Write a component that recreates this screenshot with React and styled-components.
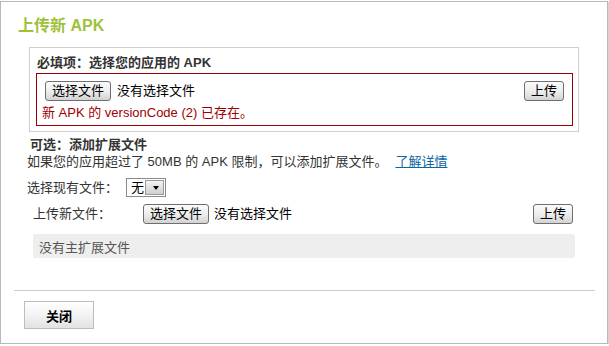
import styled, { createGlobalStyle } from 'styled-components';

const GlobalStyle = createGlobalStyle`
  html, body {
    margin: 0;
    padding: 0;
    background: #fff;
  }
  body {
    font-family: 'Liberation Sans', 'Noto Sans CJK SC', sans-serif;
    font-size: 13px;
    color: #333;
  }
`;

const Dialog = styled.div`
  box-sizing: border-box;
  width: 608px;
  height: 343px;
  margin-top: 1px;
  border: 1px solid #b8b8b8;
  box-shadow: 1px 1px 0 #d6d6d6;
  display: flex;
  flex-direction: column;
  padding: 14px 12px 0 13px;
`;

const Title = styled.h2`
  margin: 0 0 11px 4px;
  font-size: 16px;
  line-height: 20px;
  font-weight: bold;
  color: #9dc23a;
`;

const Body = styled.div`
  margin: 0 16px 0 13px;
  display: flex;
  flex-direction: column;
`;

const RequiredBox = styled.div`
  margin-left: 2px;
  border: 1px solid #cfcfcf;
  padding: 7px 5px 5px 6px;
`;

const Heading = styled.div`
  font-weight: bold;
  line-height: 16px;
  padding-left: ${(p) => p.$indent || 0}px;
  margin-top: ${(p) => p.$top || 0}px;
  color: #333;
`;

const ErrorBox = styled.div`
  margin-top: 2px;
  border: 1px solid #990000;
  padding: 7px 8px 4px 4px;
`;

const Row = styled.div`
  display: flex;
  align-items: center;
  gap: ${(p) => p.$gap || 6}px;
  padding-left: ${(p) => p.$indent || 0}px;
  padding-right: ${(p) => p.$right || 0}px;
  margin-top: ${(p) => p.$top || 0}px;
`;

const Button = styled.button`
  box-sizing: border-box;
  height: 20px;
  padding: 0 6px;
  margin-left: ${(p) => (p.$push ? 'auto' : `${p.$left || 0}px`)};
  border: 1px solid #6f6f6f;
  border-radius: 3px;
  background: linear-gradient(#fbfbfb, #ececec 55%, #d2d2d2);
  font-family: inherit;
  font-size: 13px;
  line-height: 16px;
  color: #000;
`;

const Plain = styled.span`
  color: #000;
  line-height: 16px;
`;

const ErrorText = styled.div`
  margin-top: 4px;
  padding-left: 1px;
  color: #a00000;
  line-height: 16px;
`;

const Text = styled.div`
  line-height: 18px;
  color: #333;
`;

const Link = styled.a`
  margin-left: 8px;
  color: #0b66a5;
  text-decoration: underline;
`;

const Label = styled.span`
  width: ${(p) => (p.$width ? `${p.$width}px` : 'auto')};
  color: #333;
  line-height: 16px;
`;

const Select = styled.span`
  box-sizing: border-box;
  display: inline-flex;
  align-items: center;
  width: 40px;
  height: 19px;
  border: 1px solid #8a8a8a;
  padding: 1px;
  color: #000;
  background: #fff;

  > span {
    flex: 1;
    padding-left: 3px;
    line-height: 15px;
  }
`;

const Arrow = styled.span`
  box-sizing: border-box;
  width: 15px;
  height: 15px;
  border: 1px solid #9a9a9a;
  background: linear-gradient(#f4f4f4, #cfcfcf);
  display: flex;
  align-items: center;
  justify-content: center;

  &::after {
    content: '';
    border-left: 3.5px solid transparent;
    border-right: 3.5px solid transparent;
    border-top: 4px solid #000;
  }
`;

const EmptyBar = styled.div`
  margin: 10px 4px 0 6px;
  height: 24px;
  border-radius: 0 3px 3px 0;
  background: #eeeeee;
  color: #555;
  padding-left: 6px;
  display: flex;
  align-items: center;
`;

const Footer = styled.div`
  box-sizing: border-box;
  margin-top: auto;
  height: 53px;
  border-top: 1px solid #cdcdcd;
  padding: 10px 0 0 10px;
`;

const CloseButton = styled.button`
  width: 70px;
  height: 28px;
  border: 1px solid #bdbdbd;
  background: linear-gradient(#ffffff, #f3f3f3 50%, #e2e2e2);
  font-family: inherit;
  font-size: 13px;
  font-weight: bold;
  color: #000;
`;

export default function App() {
  return (
    <>
      <GlobalStyle />
      <Dialog>
        <Title>上传新 APK</Title>
        <Body>
          <RequiredBox>
            <Heading $indent={1}>必填项：选择您的应用的 APK</Heading>
            <ErrorBox>
              <Row>
                <Button $left={4}>选择文件</Button>
                <Plain>没有选择文件</Plain>
                <Button $push>上传</Button>
              </Row>
              <ErrorText>新 APK 的 versionCode (2) 已存在。</ErrorText>
            </ErrorBox>
          </RequiredBox>
          <Heading $indent={3} $top={5}>可选：添加扩展文件</Heading>
          <Text>
            如果您的应用超过了 50MB 的 APK 限制，可以添加扩展文件。
            <Link href="#">了解详情</Link>
          </Text>
          <Row $top={7} $gap={8}>
            <Label>选择现有文件：</Label>
            <Select>
              <span>无</span>
              <Arrow />
            </Select>
          </Row>
          <Row $top={7} $indent={6} $right={6} $gap={5}>
            <Label $width={105}>上传新文件：</Label>
            <Button>选择文件</Button>
            <Plain>没有选择文件</Plain>
            <Button $push>上传</Button>
          </Row>
          <EmptyBar>没有主扩展文件</EmptyBar>
        </Body>
        <Footer>
          <CloseButton>关闭</CloseButton>
        </Footer>
      </Dialog>
    </>
  );
}
